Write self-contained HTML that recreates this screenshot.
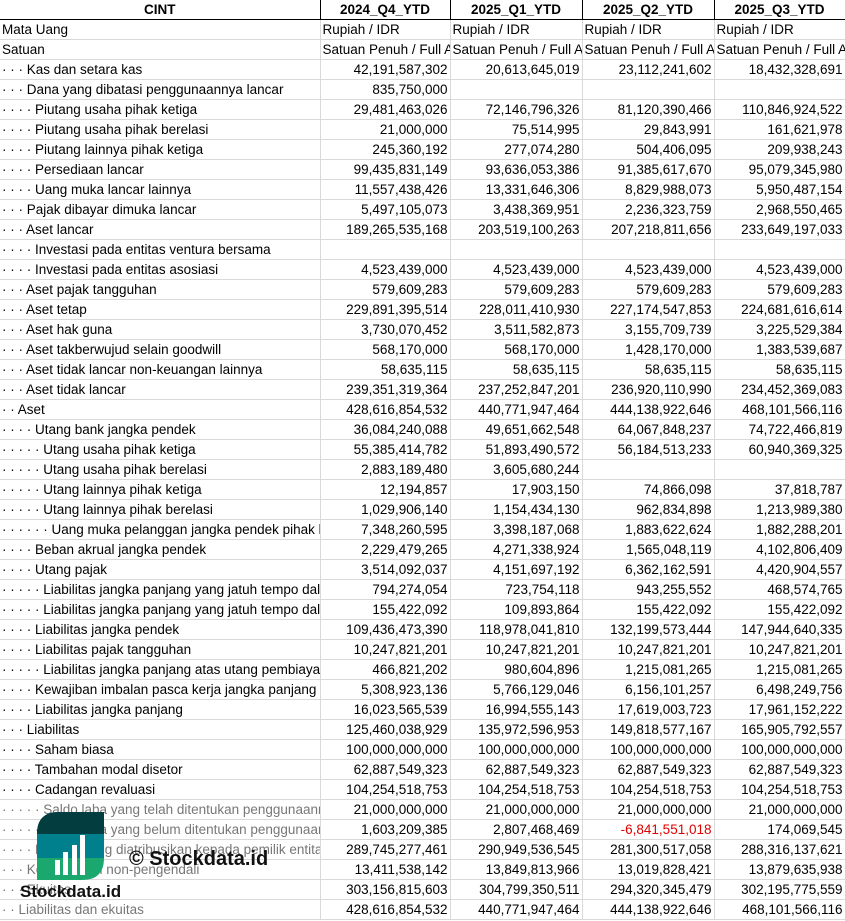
<!DOCTYPE html>
<html><head><meta charset="utf-8">
<style>
html,body{margin:0;padding:0;background:#fff;width:845px;height:921px;overflow:hidden;position:relative}
table{width:845px;border-collapse:collapse;table-layout:fixed;font-family:"Liberation Sans",Arial,sans-serif;font-size:13.5px;color:#000}
td{height:19px;padding:0 2px;border-right:1px solid #d9d9d9;border-bottom:1px solid #d9d9d9;white-space:nowrap;overflow:hidden;line-height:19px}
td.n{text-align:right}
tr.h td{font-weight:bold;text-align:center;border-right:1px solid #000;border-bottom:1px solid #000}
tr.g td.l{color:#777}
.red{color:#e00000}
.wm{position:absolute;font-family:"Liberation Sans",Arial,sans-serif;font-weight:bold;color:#111}
</style></head><body>
<table>
<colgroup><col style="width:320px"><col style="width:130px"><col style="width:132px"><col style="width:132px"><col style="width:131px"></colgroup>
<tr class="h"><td>CINT</td><td>2024_Q4_YTD</td><td>2025_Q1_YTD</td><td>2025_Q2_YTD</td><td>2025_Q3_YTD</td></tr>
<tr><td class="l">Mata Uang</td><td>Rupiah / IDR</td><td>Rupiah / IDR</td><td>Rupiah / IDR</td><td>Rupiah / IDR</td></tr>
<tr><td class="l">Satuan</td><td>Satuan Penuh / Full Amount</td><td>Satuan Penuh / Full Amount</td><td>Satuan Penuh / Full Amount</td><td>Satuan Penuh / Full Amount</td></tr>
<tr><td class="l">· · · Kas dan setara kas</td><td class="n">42,191,587,302</td><td class="n">20,613,645,019</td><td class="n">23,112,241,602</td><td class="n">18,432,328,691</td></tr>
<tr><td class="l">· · · Dana yang dibatasi penggunaannya lancar</td><td class="n">835,750,000</td><td></td><td></td><td></td></tr>
<tr><td class="l">· · · · Piutang usaha pihak ketiga</td><td class="n">29,481,463,026</td><td class="n">72,146,796,326</td><td class="n">81,120,390,466</td><td class="n">110,846,924,522</td></tr>
<tr><td class="l">· · · · Piutang usaha pihak berelasi</td><td class="n">21,000,000</td><td class="n">75,514,995</td><td class="n">29,843,991</td><td class="n">161,621,978</td></tr>
<tr><td class="l">· · · · Piutang lainnya pihak ketiga</td><td class="n">245,360,192</td><td class="n">277,074,280</td><td class="n">504,406,095</td><td class="n">209,938,243</td></tr>
<tr><td class="l">· · · · Persediaan lancar</td><td class="n">99,435,831,149</td><td class="n">93,636,053,386</td><td class="n">91,385,617,670</td><td class="n">95,079,345,980</td></tr>
<tr><td class="l">· · · · Uang muka lancar lainnya</td><td class="n">11,557,438,426</td><td class="n">13,331,646,306</td><td class="n">8,829,988,073</td><td class="n">5,950,487,154</td></tr>
<tr><td class="l">· · · Pajak dibayar dimuka lancar</td><td class="n">5,497,105,073</td><td class="n">3,438,369,951</td><td class="n">2,236,323,759</td><td class="n">2,968,550,465</td></tr>
<tr><td class="l">· · · Aset lancar</td><td class="n">189,265,535,168</td><td class="n">203,519,100,263</td><td class="n">207,218,811,656</td><td class="n">233,649,197,033</td></tr>
<tr><td class="l">· · · · Investasi pada entitas ventura bersama</td><td></td><td></td><td></td><td></td></tr>
<tr><td class="l">· · · · Investasi pada entitas asosiasi</td><td class="n">4,523,439,000</td><td class="n">4,523,439,000</td><td class="n">4,523,439,000</td><td class="n">4,523,439,000</td></tr>
<tr><td class="l">· · · Aset pajak tangguhan</td><td class="n">579,609,283</td><td class="n">579,609,283</td><td class="n">579,609,283</td><td class="n">579,609,283</td></tr>
<tr><td class="l">· · · Aset tetap</td><td class="n">229,891,395,514</td><td class="n">228,011,410,930</td><td class="n">227,174,547,853</td><td class="n">224,681,616,614</td></tr>
<tr><td class="l">· · · Aset hak guna</td><td class="n">3,730,070,452</td><td class="n">3,511,582,873</td><td class="n">3,155,709,739</td><td class="n">3,225,529,384</td></tr>
<tr><td class="l">· · · Aset takberwujud selain goodwill</td><td class="n">568,170,000</td><td class="n">568,170,000</td><td class="n">1,428,170,000</td><td class="n">1,383,539,687</td></tr>
<tr><td class="l">· · · Aset tidak lancar non-keuangan lainnya</td><td class="n">58,635,115</td><td class="n">58,635,115</td><td class="n">58,635,115</td><td class="n">58,635,115</td></tr>
<tr><td class="l">· · · Aset tidak lancar</td><td class="n">239,351,319,364</td><td class="n">237,252,847,201</td><td class="n">236,920,110,990</td><td class="n">234,452,369,083</td></tr>
<tr><td class="l">· · Aset</td><td class="n">428,616,854,532</td><td class="n">440,771,947,464</td><td class="n">444,138,922,646</td><td class="n">468,101,566,116</td></tr>
<tr><td class="l">· · · · Utang bank jangka pendek</td><td class="n">36,084,240,088</td><td class="n">49,651,662,548</td><td class="n">64,067,848,237</td><td class="n">74,722,466,819</td></tr>
<tr><td class="l">· · · · · Utang usaha pihak ketiga</td><td class="n">55,385,414,782</td><td class="n">51,893,490,572</td><td class="n">56,184,513,233</td><td class="n">60,940,369,325</td></tr>
<tr><td class="l">· · · · · Utang usaha pihak berelasi</td><td class="n">2,883,189,480</td><td class="n">3,605,680,244</td><td></td><td></td></tr>
<tr><td class="l">· · · · · Utang lainnya pihak ketiga</td><td class="n">12,194,857</td><td class="n">17,903,150</td><td class="n">74,866,098</td><td class="n">37,818,787</td></tr>
<tr><td class="l">· · · · · Utang lainnya pihak berelasi</td><td class="n">1,029,906,140</td><td class="n">1,154,434,130</td><td class="n">962,834,898</td><td class="n">1,213,989,380</td></tr>
<tr><td class="l">· · · · · · Uang muka pelanggan jangka pendek pihak ketiga</td><td class="n">7,348,260,595</td><td class="n">3,398,187,068</td><td class="n">1,883,622,624</td><td class="n">1,882,288,201</td></tr>
<tr><td class="l">· · · · Beban akrual jangka pendek</td><td class="n">2,229,479,265</td><td class="n">4,271,338,924</td><td class="n">1,565,048,119</td><td class="n">4,102,806,409</td></tr>
<tr><td class="l">· · · · Utang pajak</td><td class="n">3,514,092,037</td><td class="n">4,151,697,192</td><td class="n">6,362,162,591</td><td class="n">4,420,904,557</td></tr>
<tr><td class="l">· · · · · Liabilitas jangka panjang yang jatuh tempo dalam satu tahun</td><td class="n">794,274,054</td><td class="n">723,754,118</td><td class="n">943,255,552</td><td class="n">468,574,765</td></tr>
<tr><td class="l">· · · · · Liabilitas jangka panjang yang jatuh tempo dalam satu tahun</td><td class="n">155,422,092</td><td class="n">109,893,864</td><td class="n">155,422,092</td><td class="n">155,422,092</td></tr>
<tr><td class="l">· · · · Liabilitas jangka pendek</td><td class="n">109,436,473,390</td><td class="n">118,978,041,810</td><td class="n">132,199,573,444</td><td class="n">147,944,640,335</td></tr>
<tr><td class="l">· · · · Liabilitas pajak tangguhan</td><td class="n">10,247,821,201</td><td class="n">10,247,821,201</td><td class="n">10,247,821,201</td><td class="n">10,247,821,201</td></tr>
<tr><td class="l">· · · · · Liabilitas jangka panjang atas utang pembiayaan</td><td class="n">466,821,202</td><td class="n">980,604,896</td><td class="n">1,215,081,265</td><td class="n">1,215,081,265</td></tr>
<tr><td class="l">· · · · Kewajiban imbalan pasca kerja jangka panjang</td><td class="n">5,308,923,136</td><td class="n">5,766,129,046</td><td class="n">6,156,101,257</td><td class="n">6,498,249,756</td></tr>
<tr><td class="l">· · · · Liabilitas jangka panjang</td><td class="n">16,023,565,539</td><td class="n">16,994,555,143</td><td class="n">17,619,003,723</td><td class="n">17,961,152,222</td></tr>
<tr><td class="l">· · · Liabilitas</td><td class="n">125,460,038,929</td><td class="n">135,972,596,953</td><td class="n">149,818,577,167</td><td class="n">165,905,792,557</td></tr>
<tr><td class="l">· · · · Saham biasa</td><td class="n">100,000,000,000</td><td class="n">100,000,000,000</td><td class="n">100,000,000,000</td><td class="n">100,000,000,000</td></tr>
<tr><td class="l">· · · · Tambahan modal disetor</td><td class="n">62,887,549,323</td><td class="n">62,887,549,323</td><td class="n">62,887,549,323</td><td class="n">62,887,549,323</td></tr>
<tr><td class="l">· · · · Cadangan revaluasi</td><td class="n">104,254,518,753</td><td class="n">104,254,518,753</td><td class="n">104,254,518,753</td><td class="n">104,254,518,753</td></tr>
<tr class="g"><td class="l">· · · · · Saldo laba yang telah ditentukan penggunaannya</td><td class="n">21,000,000,000</td><td class="n">21,000,000,000</td><td class="n">21,000,000,000</td><td class="n">21,000,000,000</td></tr>
<tr class="g"><td class="l">· · · · · Saldo laba yang belum ditentukan penggunaannya</td><td class="n">1,603,209,385</td><td class="n">2,807,468,469</td><td class="n red">-6,841,551,018</td><td class="n">174,069,545</td></tr>
<tr class="g"><td class="l">· · · · Ekuitas yang diatribusikan kepada pemilik entitas induk</td><td class="n">289,745,277,461</td><td class="n">290,949,536,545</td><td class="n">281,300,517,058</td><td class="n">288,316,137,621</td></tr>
<tr class="g"><td class="l">· · · Kepentingan non-pengendali</td><td class="n">13,411,538,142</td><td class="n">13,849,813,966</td><td class="n">13,019,828,421</td><td class="n">13,879,635,938</td></tr>
<tr class="g"><td class="l">· · · Ekuitas</td><td class="n">303,156,815,603</td><td class="n">304,799,350,511</td><td class="n">294,320,345,479</td><td class="n">302,195,775,559</td></tr>
<tr class="g"><td class="l">· · Liabilitas dan ekuitas</td><td class="n">428,616,854,532</td><td class="n">440,771,947,464</td><td class="n">444,138,922,646</td><td class="n">468,101,566,116</td></tr>
</table>
<svg style="position:absolute;left:37px;top:812px" width="67" height="68" viewBox="0 0 67 68">
<defs><clipPath id="c"><path d="M0 0 H67 V46 Q67 68 45 68 H0 V22 Q0 0 22 0 Z"/></clipPath></defs>
<g clip-path="url(#c)">
<rect x="0" y="0" width="67" height="68" fill="#1aa86e"/>
<rect x="0" y="0" width="67" height="46" fill="#00808c"/>
<rect x="0" y="0" width="67" height="22" fill="#033d3f"/>
</g>
<g fill="#fff"><rect x="18" y="48" width="5" height="15"/><rect x="26" y="40" width="5" height="23"/><rect x="35" y="33" width="5" height="30"/><rect x="43" y="23" width="5" height="40"/></g>
</svg>
<div class="wm" style="left:129px;top:848px;font-size:20px">© Stockdata.id</div>
<div class="wm" style="left:20px;top:882px;font-size:17px">Stockdata.id</div>
</body></html>
